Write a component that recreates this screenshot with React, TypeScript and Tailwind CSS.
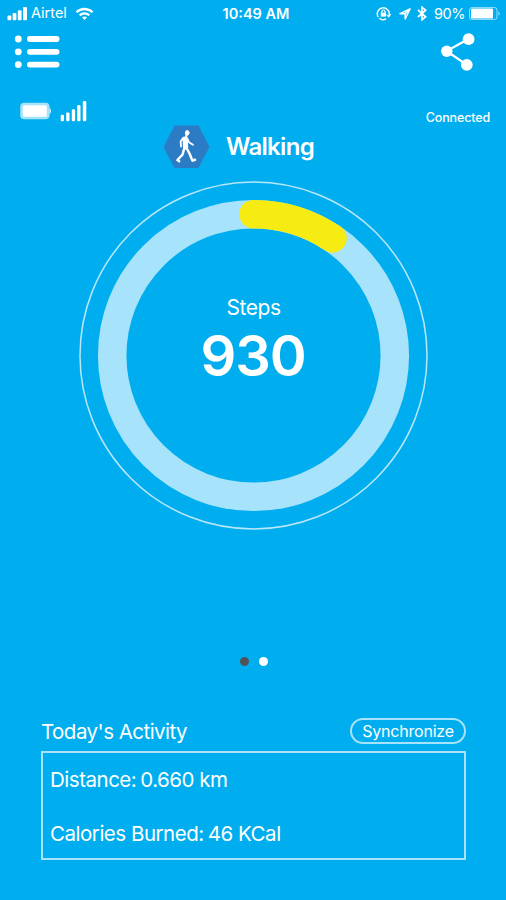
import clsx from 'clsx'

const ring = { size: 350, center: 175, radius: 141.3, width: 28.5, outline: 173.5 }

const activity = [
  { label: 'Distance', value: '0.660 km' },
  { label: 'Calories Burned', value: '46 KCal' },
]

// Point on the ring, angle measured clockwise from 12 o'clock
function ringPoint(deg: number) {
  const rad = (deg * Math.PI) / 180
  return `${ring.center + ring.radius * Math.sin(rad)} ${ring.center - ring.radius * Math.cos(rad)}`
}

function StatusBar() {
  return (
    <div className="grid h-[27px] grid-cols-3 items-center text-[14.5px] leading-none">
      <div className="flex items-center pl-[7px]">
        <svg width="21" height="14" viewBox="0 0 21 14" fill="currentColor">
          <rect x="0.5" y="8.5" width="3.8" height="4.8" rx="1" />
          <rect x="5.6" y="6" width="3.8" height="7.3" rx="1" />
          <rect x="10.8" y="3.2" width="3.8" height="10.1" rx="1" />
          <rect x="16" y="0" width="4" height="13.3" rx="1" />
        </svg>
        <span className="ml-[3px] w-[37px]">Airtel</span>
        <svg className="ml-[7px]" width="19" height="14" viewBox="0 0 19 14" fill="none" stroke="currentColor" strokeWidth="2.3">
          <path d="M1.5 5.3C6 .9 13 .9 17.5 5.3" />
          <path d="M4.7 8.4C7.4 5.8 11.6 5.8 14.3 8.4" />
          <path d="M7 10.3C8.3 9.1 10.7 9.1 12 10.3L9.5 12.9Z" fill="currentColor" stroke="none" />
        </svg>
      </div>
      <p className="pt-px pl-[6px] text-center font-semibold whitespace-nowrap">10:49 AM</p>
      <div className="flex items-center justify-end pr-[5px]">
        <svg width="15" height="15" viewBox="0 0 15 15" fill="none" stroke="currentColor">
          <path d="M2.2 11A6 6 0 1 1 12.8 10.2" strokeWidth="1.4" />
          <path d="M10.6 8.6L12.8 10.8L14.6 8" strokeWidth="1.2" />
          <path d="M3.2 12.2A6 6 0 0 0 10.2 12.9" strokeWidth="1.4" />
          <rect x="4.8" y="6.6" width="5.2" height="4" fill="currentColor" stroke="none" />
          <path d="M5.8 7V5.6A1.6 1.6 0 0 1 9 5.6V7" strokeWidth="1.2" />
        </svg>
        <svg className="ml-[8px]" width="12" height="12" viewBox="0 0 12 12" fill="none" stroke="currentColor" strokeWidth="1.5" strokeLinejoin="round">
          <path d="M11 1L1 5.7H6.2V11Z" />
          <path d="M11 1L6.2 5.7" />
        </svg>
        <svg className="ml-[6px]" width="10" height="15" viewBox="0 0 10 15" fill="none" stroke="currentColor" strokeWidth="1.7">
          <path d="M1 4L8.6 10.8L5 13.8V1.2L8.6 4.2L1 11" />
        </svg>
        <span className="ml-[7px] w-[31px] pt-px tracking-[-0.5px]">90%</span>
        <svg className="ml-[4px]" width="32" height="13" viewBox="0 0 32 13" fill="none">
          <rect x="0.5" y="0.5" width="27.5" height="12" rx="2.5" stroke="currentColor" strokeOpacity="0.55" />
          <rect x="2" y="1.5" width="22" height="10" rx="1" fill="currentColor" />
          <path d="M29.5 4.2Q32 6.5 29.5 8.8Z" fill="currentColor" fillOpacity="0.6" />
        </svg>
      </div>
    </div>
  )
}

function NavBar() {
  return (
    <div className="flex h-[50px] items-center justify-between pr-[31px] pl-[14px]">
      <svg width="46" height="34" viewBox="0 0 46 34" fill="currentColor">
        {[4, 16.8, 29.6].map((y) => (
          <g key={y}>
            <circle cx="4.3" cy={y} r="3.4" />
            <rect x="13" y={y - 2.9} width="32.5" height="5.8" rx="2.9" />
          </g>
        ))}
      </svg>
      <svg width="34" height="38" viewBox="0 0 34 38" fill="currentColor">
        <path d="M27.5 6L5.5 18L25.5 31.7" fill="none" stroke="currentColor" strokeWidth="2.2" />
        <circle cx="27.6" cy="6.2" r="5.9" />
        <circle cx="5.8" cy="18.2" r="5.7" />
        <circle cx="25.8" cy="31.8" r="5.9" />
      </svg>
    </div>
  )
}

function DeviceStatus() {
  return (
    <div className="flex h-[48px] items-start justify-between pt-[23px] pr-[16px] pl-[20px]">
      <div className="flex">
        <svg width="32" height="22" viewBox="0 0 32 22" fill="currentColor">
          <rect x="0.2" y="2.7" width="29.3" height="16.6" rx="4" fillOpacity="0.65" />
          <rect x="2.8" y="5.3" width="24" height="11.4" rx="1.5" />
          <path d="M29.5 7.5Q32.6 11 29.5 14.5Z" fillOpacity="0.85" />
        </svg>
        <svg className="ml-[8px]" width="28" height="22" viewBox="0 0 28 22" fill="currentColor">
          <rect x="0.7" y="14.7" width="3.3" height="6.6" rx="1.2" />
          <rect x="6.2" y="12.4" width="3.3" height="8.9" rx="1.2" />
          <rect x="11.8" y="9.2" width="3.3" height="12.1" rx="1.2" />
          <rect x="17.2" y="5" width="3.3" height="16.3" rx="1.2" />
          <rect x="22.8" y="1" width="3.5" height="20.3" rx="1.2" />
        </svg>
      </div>
      <span className="mt-[10px] text-[12.5px] leading-[15px] font-medium tracking-[-0.15px]">Connected</span>
    </div>
  )
}

function ActivityTitle() {
  return (
    <div className="flex h-[44px] items-center pl-[164px]">
      <svg width="46" height="44" viewBox="0 0 46 44">
        <path d="M-.5 22L10.5 .5H34.5L45.5 22L34.5 43H10.5Z" fill="#2b7cc5" />
        <g fill="none" stroke="#fff" strokeLinecap="round" strokeLinejoin="round">
          <ellipse cx="23.2" cy="7.9" rx="1.8" ry="2.4" fill="#fff" strokeWidth="1" />
          <path d="M22.3 10V13" strokeWidth="2" />
          <path d="M21.1 14L21.6 22" strokeWidth="5.2" />
          <path d="M19.3 12.8L16.6 16.5L17 21.5" strokeWidth="1.8" />
          <path d="M23.2 13.5L25.3 17.6L29 19.8" strokeWidth="1.8" />
          <path d="M20.3 23L18.6 29.5L13.4 35L15.2 36.2" strokeWidth="2.5" />
          <path d="M22.5 23L25.5 28.5L28.4 35.6L31 34.8" strokeWidth="2.5" />
        </g>
      </svg>
      <h1 className="ml-[16px] text-[24px] leading-none font-semibold tracking-[-0.7px]">Walking</h1>
    </div>
  )
}

function StepsRing({ steps, progress }: { steps: number; progress: number }) {
  return (
    <div className="relative mt-[11px] ml-[78px] size-[350px]">
      <svg width={ring.size} height={ring.size} viewBox="-0.5 -0.5 350 350" fill="none">
        <circle cx="175" cy="175" r={ring.outline} stroke="#b8e7fb" strokeWidth="1.5" />
        <circle cx="175" cy="175" r={ring.radius} stroke="#a7e3fa" strokeWidth={ring.width} />
        <path
          d={`M${ringPoint(0)}A${ring.radius} ${ring.radius} 0 0 1 ${ringPoint(progress)}`}
          stroke="#f6eb13"
          strokeWidth={ring.width}
          strokeLinecap="round"
        />
      </svg>
      {/* Count sits in the middle of the ring */}
      <div className="absolute inset-0 flex flex-col items-center pt-[116px]">
        <span className="pl-px text-[21px] leading-[24px] tracking-[-0.45px]">Steps</span>
        <span className="mt-[6px] text-[56px] leading-[60px] font-semibold tracking-[-1.2px]">{steps}</span>
      </div>
    </div>
  )
}

function Pager({ active }: { active: number }) {
  return (
    <div className="mt-[127px] flex justify-center gap-[10px] pl-[1px]">
      {[0, 1].map((page) => (
        <span key={page} className={clsx('size-[9px] rounded-full', page === active ? 'bg-[#505459]' : 'bg-white')} />
      ))}
    </div>
  )
}

export default function App() {
  return (
    <main className="h-[900px] w-[506px] overflow-hidden bg-[#00aeef] font-['Inter',sans-serif] text-white">
      <StatusBar />
      <NavBar />
      <DeviceStatus />
      <ActivityTitle />
      <StepsRing steps={930} progress={34} />
      <Pager active={0} />

      <section className="mt-[52px] mr-[40px] ml-[41px]">
        <div className="flex h-[26px] items-center justify-between">
          <h2 className="pt-[2px] text-[20.5px] leading-none tracking-[-0.53px]">Today's Activity</h2>
          <button className="h-[26px] w-[116px] rounded-full border-2 border-[#a7e3fa] text-[16px] leading-none tracking-[-0.2px]">
            Synchronize
          </button>
        </div>
        <dl className="mt-[7px] h-[109px] border-2 border-[#a7e3fa] pl-[7px]">
          {activity.map((item) => (
            <div key={item.label} className="flex h-[54px] items-center gap-[4px] text-[20.5px] leading-none tracking-[-0.48px]">
              <dt>{item.label}:</dt>
              <dd>{item.value}</dd>
            </div>
          ))}
        </dl>
      </section>
    </main>
  )
}
